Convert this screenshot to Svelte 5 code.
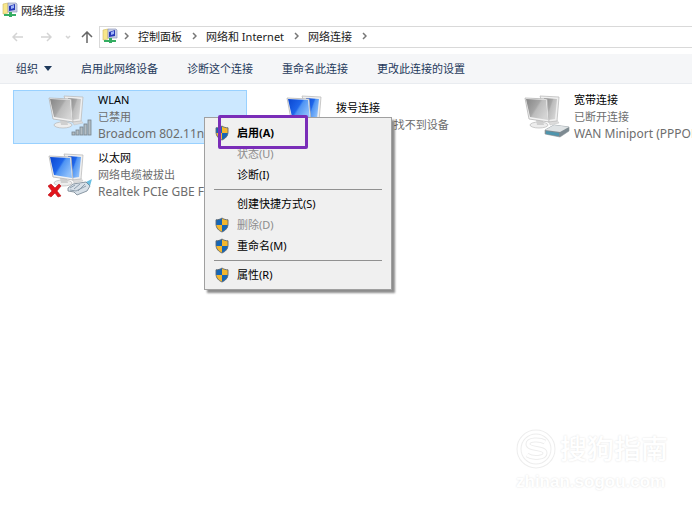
<script lang="ts">
    type Connection = {
        name: string;
        status: string;
        device?: string;
        enabled: boolean;
        badge?: "signal" | "modem" | "plug";
    };

    const commands = ["启用此网络设备", "诊断这个连接", "重命名此连接", "更改此连接的设置"];
    const path = ["控制面板", "网络和 Internet", "网络连接"];

    const connections: Connection[] = [
        { name: "WLAN", status: "已禁用", device: "Broadcom 802.11n", enabled: false, badge: "signal" },
        { name: "拨号连接", status: "已断开连接 找不到设备", enabled: true },
        { name: "宽带连接", status: "已断开连接", device: "WAN Miniport (PPPOE)", enabled: false, badge: "modem" },
        { name: "以太网", status: "网络电缆被拔出", device: "Realtek PCIe GBE Family", enabled: true, badge: "plug" },
    ];

    const menu = [
        [
            { label: "启用(A)", shield: true, bold: true },
            { label: "状态(U)", disabled: true },
            { label: "诊断(I)" },
        ],
        [
            { label: "创建快捷方式(S)" },
            { label: "删除(D)", shield: true, disabled: true },
            { label: "重命名(M)", shield: true },
        ],
        [{ label: "属性(R)", shield: true }],
    ];

    let selected = $state("WLAN");
</script>

{#snippet appIcon()}
    <svg class="app-icon" viewBox="0 0 16 16" aria-hidden="true">
        <path d="M1 2l5-1v10l-5 1z" fill="#f7e68a" stroke="#cdbb62" stroke-width=".6" />
        <path d="M6 1h8l1 1v8H6z" fill="#c9d0e6" stroke="#8f9abc" stroke-width=".7" />
        <path d="M7 4l6-2v6l-6 1z" fill="#2638b8" />
        <path d="M9 4l3-1v3l-3 1z" fill="#9db4fa" />
        <path d="M7 10h3v2h4v2h-4v1H7v-1H2v-2h5z" fill="#35ad62" />
    </svg>
{/snippet}

{#snippet shield()}
    <svg class="shield" viewBox="0 0 14 16" aria-hidden="true">
        <path d="M7 1C5.500 2.200 3 2.800 1 2.800V8h6z" fill="#1766b5" />
        <path d="M7 1c1.500 1.200 4 1.800 6 1.800V8H7z" fill="#f3b72f" />
        <path d="M1 8h6v7C3.700 13.700 1.200 11.500 1 8z" fill="#f3b72f" />
        <path d="M7 8h6c-.2 3.500-2.700 5.700-6 7z" fill="#1766b5" />
        <path d="M7 1C5.500 2.200 3 2.800 1 2.800V7c0 4 2.600 6.600 6 8 3.400-1.400 6-4 6-8V2.800C11 2.800 8.500 2.200 7 1z" fill="none" stroke="#5d6870" stroke-width=".9" />
    </svg>
{/snippet}

{#snippet computers(c: Connection, i: number)}
    <svg class="computers" viewBox="0 0 46 50" aria-hidden="true">
        <defs>
            <linearGradient id="screen{i}" x1="0" y1="0" x2="1" y2=".6">
                <stop offset="0" stop-color={c.enabled ? "#0a45cf" : "#858585"} />
                <stop offset=".5" stop-color={c.enabled ? "#1f66ea" : "#a6a6a6"} />
                <stop offset=".58" stop-color={c.enabled ? "#4f94f3" : "#bcbcbc"} />
                <stop offset="1" stop-color={c.enabled ? "#8fc0fb" : "#d4d4d4"} />
            </linearGradient>
        </defs>
        <path d="M24 28l8-1 3 4-9 2z" fill="#dcdcdc" stroke="#c2c2c2" stroke-width=".5" />
        <path d="M16 4l19 1-2 24-9 1z" fill="#efefef" stroke="#bdbdbd" stroke-width=".8" />
        <path d="M20 6l13 1-2 20-7 1z" fill="url(#screen{i})" />
        <ellipse cx="15" cy="33" rx="9" ry="3" fill="#ededed" stroke="#b8b8b8" stroke-width=".7" />
        <path d="M12 28l7 1 1 4h-7z" fill="#cfcfcf" />
        <path d="M1 6l22 1 2 23-20-3z" fill="#f3f3f3" stroke="#b4b4b4" stroke-width=".8" />
        <path d="M2 7l20 1 2 20-18-3z" fill="url(#screen{i})" />
        {#if c.badge === "signal"}
            <g fill="#b3bdc4" stroke="#77848d" stroke-width=".8">
                <rect x="24" y="40" width="3" height="3" />
                <rect x="28" y="38" width="3" height="5" />
                <rect x="32" y="35" width="3" height="8" />
                <rect x="36" y="32" width="3" height="11" />
                <rect x="40" y="28" width="3" height="15" />
            </g>
        {:else if c.badge === "modem"}
            <path d="M21 38l9-5 15 2v4l-9 6-15-3z" fill="#7d8a91" stroke="#8a9499" stroke-width=".6" />
            <path d="M21 38l9-5 15 2-9 5z" fill="#dfe3e5" />
            <path d="M22 39l13 2v3l-13-2z" fill="#4e95ad" />
        {:else if c.badge === "plug"}
            <path d="M0 36l3-2 4 4 4-4 2 2-4 5 4 5-3 1-3-4-4 4-3-2 4-4z" fill="#e2141c" stroke="#b90f14" stroke-width=".6" />
            <path d="M34 34l10-5-2 7-6 3z" fill="#6bbfe2" />
            <path d="M20 38l5-4 13-2 4 4-3 5-10 4-3-3-6-1z" fill="#d7e0e8" stroke="#71818f" stroke-width=".8" />
            <path d="M22 38l5-3M26 39l6-5M30 41l7-7M22 40l6 1 10-5" fill="none" stroke="#8496a6" stroke-width=".9" />
        {/if}
    </svg>
{/snippet}

<div class="window">
    <header class="title-bar">
        {@render appIcon()}
        <h1>网络连接</h1>
    </header>

    <nav class="nav-bar">
        <button class="arrow" disabled aria-label="后退">
            <svg viewBox="0 0 12 12"><path d="M11 6H1M5 2L1 6l4 4" /></svg>
        </button>
        <button class="arrow" disabled aria-label="前进">
            <svg viewBox="0 0 12 12"><path d="M1 6h10M7 2l4 4-4 4" /></svg>
        </button>
        <button class="arrow recent" disabled aria-label="最近浏览的位置">
            <svg viewBox="0 0 12 12"><path d="M4 5l2 2 2-2" /></svg>
        </button>
        <button class="arrow up" aria-label="向上">
            <svg viewBox="0 0 12 12"><path d="M6 12V1M1 6l5-5 5 5" /></svg>
        </button>
        <div class="address">
            {@render appIcon()}
            <svg class="chevron" viewBox="0 0 6 8"><path d="M2 1l3 3-3 3" /></svg>
            {#each path as part}
                <button>{part}</button>
                <svg class="chevron" viewBox="0 0 6 8"><path d="M2 1l3 3-3 3" /></svg>
            {/each}
        </div>
    </nav>

    <div class="toolbar">
        <button class="organize">
            组织
            <svg viewBox="0 0 8 5"><path d="M0 0h8L4 5z" /></svg>
        </button>
        {#each commands as command}
            <button>{command}</button>
        {/each}
    </div>

    <main>
        <div class="connections">
            {#each connections as c, i}
                <button class="tile" class:selected={selected === c.name} onclick={() => (selected = c.name)}>
                    {@render computers(c, i)}
                    <span class="details">
                        <span class="name">{c.name}</span>
                        <span>{c.status}</span>
                        {#if c.device}
                            <span class="device">{c.device}</span>
                        {/if}
                    </span>
                </button>
            {/each}
        </div>
    </main>

    <div class="context-menu" role="menu">
        {#each menu as group, i}
            {#if i > 0}
                <hr />
            {/if}
            {#each group as item}
                <button role="menuitem" class:bold={item.bold} disabled={item.disabled}>
                    <span class="menu-icon">
                        {#if item.shield}
                            {@render shield()}
                        {/if}
                    </span>
                    {item.label}
                </button>
            {/each}
        {/each}
        <div class="highlight"></div>
    </div>

    <div class="watermark">
        <div class="brand">
            <svg viewBox="0 0 40 40" aria-hidden="true">
                <g fill="none" stroke="#ededed" stroke-width="5">
                    <circle cx="20" cy="20" r="17" />
                    <path d="M29 13c-5-3-17-3-17 2 0 6 17 3 17 9 0 5-12 6-18 2" />
                </g>
                <g fill="none" stroke="#fff" stroke-width="3">
                    <circle cx="20" cy="20" r="17" />
                    <path d="M29 13c-5-3-17-3-17 2 0 6 17 3 17 9 0 5-12 6-18 2" />
                </g>
            </svg>
            <span>搜狗指南</span>
        </div>
        <div class="site">zhinan.sogou.com</div>
    </div>
</div>

<style>
    :global(body) {
        margin: 0;
        background: #fff;
    }

    .window {
        position: relative;
        min-height: 100vh;
        overflow: hidden;
        background: #fff;
        color: #1a1a1a;
        font-family: "Noto Sans", "Noto Sans CJK SC", sans-serif;
        font-size: 11px;
        line-height: 17px;
    }

    button {
        margin: 0;
        padding: 0;
        border: 0;
        background: none;
        color: inherit;
        font: inherit;
        text-align: left;
        white-space: nowrap;
    }

    .title-bar {
        display: flex;
        align-items: center;
        gap: 3px;
        height: 20px;
        padding-left: 2px;
    }

    h1 {
        margin: 0;
        font-size: 11px;
        font-weight: 400;
    }

    .app-icon {
        flex: none;
        width: 16px;
        height: 16px;
    }

    .nav-bar {
        display: flex;
        align-items: center;
        height: 22px;
        margin: 6px 0;
        padding-left: 12px;
    }

    .arrow {
        display: flex;
        width: 12px;
        height: 12px;
        margin-right: 16px;
    }

    .arrow svg {
        width: 12px;
        height: 12px;
        fill: none;
        stroke: #d4d4d4;
        stroke-width: 1.5;
    }

    .arrow.recent {
        margin-left: -6px;
        margin-right: 6px;
    }

    .arrow.up {
        margin-left: 1px;
        margin-right: 6px;
    }

    .arrow.up svg {
        stroke: #666;
    }

    .address {
        display: flex;
        flex: 1;
        align-items: center;
        gap: 9px;
        box-sizing: border-box;
        height: 22px;
        padding: 0 0 2px 2px;
        border: 1px solid #d9d9d9;
        border-right: 0;
    }

    .address .app-icon {
        margin-right: -4px;
    }

    .chevron {
        width: 6px;
        height: 8px;
        fill: none;
        stroke: #777;
        stroke-width: 1.5;
    }

    .toolbar {
        display: flex;
        align-items: center;
        gap: 29px;
        height: 29px;
        padding-left: 16px;
        border-bottom: 1px solid #e9ecf0;
        background: #f5f6f8;
        color: #1e395b;
    }

    .organize {
        display: flex;
        align-items: center;
        gap: 6px;
    }

    .organize svg {
        width: 8px;
        height: 5px;
        fill: #1e395b;
    }

    main {
        padding: 6px 0 0 13px;
    }

    .connections {
        display: grid;
        grid-template-columns: repeat(3, 234px);
        grid-auto-rows: 54px;
        gap: 4px;
    }

    .tile {
        display: flex;
        align-items: center;
        gap: 4px;
        box-sizing: border-box;
        padding-left: 34px;
        border: 1px solid transparent;
        color: #6d6d6d;
    }

    .tile.selected {
        border-color: #99d1ff;
        background: #cce8ff;
    }

    .computers {
        flex: none;
        width: 46px;
        height: 50px;
    }

    .details {
        display: flex;
        flex-direction: column;
        padding-bottom: 2px;
    }

    .name {
        color: #000;
    }

    .device {
        font-size: 12px;
    }

    .context-menu {
        position: absolute;
        top: 117px;
        left: 204px;
        box-sizing: border-box;
        width: 188px;
        padding: 4px 2px;
        border: 1px solid #a0a0a0;
        background: #f0f0f0;
        box-shadow: 3px 3px 2px rgba(0, 0, 0, 0.45);
        color: #000;
    }

    .context-menu button {
        display: flex;
        align-items: center;
        width: 100%;
        height: 21px;
    }

    .context-menu button:disabled {
        color: #8d8d8d;
    }

    .context-menu button.bold {
        font-weight: 700;
    }

    .menu-icon {
        display: flex;
        width: 22px;
        padding-left: 8px;
    }

    .shield {
        width: 14px;
        height: 16px;
    }

    hr {
        height: 1px;
        margin: 4px 7px 3px;
        border: 0;
        background: #919191;
    }

    .highlight {
        position: absolute;
        top: -3px;
        left: 13px;
        width: 84px;
        height: 28px;
        border: 3px solid #7a2db8;
        border-radius: 2px;
        pointer-events: none;
    }

    .watermark {
        position: absolute;
        right: 24px;
        bottom: 21px;
        color: #fff;
        text-shadow: 0 0 2px #dedede;
    }

    .brand {
        display: flex;
        align-items: center;
        gap: 4px;
        font-size: 27px;
        font-weight: 500;
        line-height: 40px;
    }

    .brand svg {
        width: 40px;
        height: 40px;
    }

    .site {
        font-family: "Liberation Sans", sans-serif;
        font-size: 17px;
        font-weight: 700;
        line-height: 26px;
    }
</style>
